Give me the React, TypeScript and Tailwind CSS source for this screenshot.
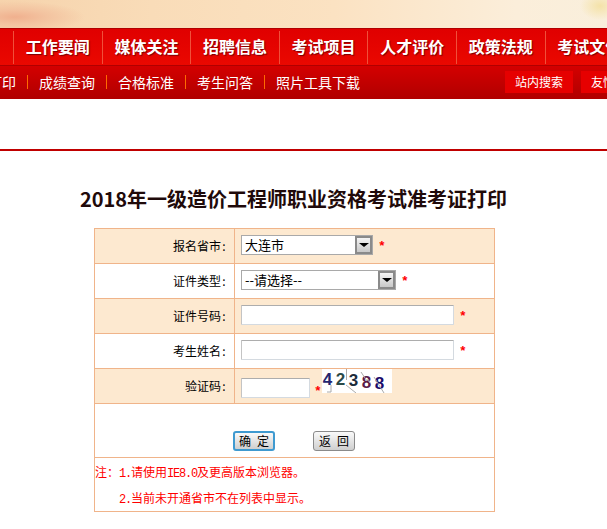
const navItems = ["工作要闻", "媒体关注", "招聘信息", "考试项目", "人才评价", "政策法规", "考试文件"];
const subItems = ["成绩查询", "合格标准", "考生问答", "照片工具下载"];

function SelectBox({ value, width }: { value: string; width: string }) {
  return (
    <div className={`flex h-[20px] items-center border border-[#a9a9a9] bg-white ${width}`}>
      <span className="flex-1 pl-[3px] text-[13px] leading-[18px] text-black">{value}</span>
      <span className="flex h-[18px] w-[17px] items-center justify-center border-2 border-[#8a8a8a] bg-gradient-to-b from-[#f4f4f4] to-[#c8c8c8]">
        <span className="h-0 w-0 border-x-[5px] border-t-[4px] border-x-transparent border-t-black"></span>
      </span>
    </div>
  );
}

function TextBox({ width }: { width: string }) {
  return <div className={`h-[20px] rounded-[1px] border border-[#d4dae0] border-t-[#adadad] border-l-[#c4c4c4] bg-white ${width}`}></div>;
}

function Star({ className }: { className: string }) {
  return <span className={`font-['Liberation_Mono',monospace] text-[13px] font-bold leading-none text-[#ff0000] ${className}`}>*</span>;
}

function Mono({ children }: { children: React.ReactNode }) {
  return <span className="font-['Liberation_Mono',monospace] tracking-[-1.2px]">{children}</span>;
}

function Row({ label, shaded, cell, children }: { label: string; shaded?: boolean; cell?: string; children: React.ReactNode }) {
  return (
    <div className={`flex h-[35px] border-b border-[#f0b48a] ${shaded ? "bg-[#fde9d0]" : "bg-white"}`}>
      <div className="flex w-[140px] items-center justify-end border-r border-[#f0b48a] pr-[7px] text-[12px] text-black">
        {label}
        <span className="inline-block w-[6px] text-center">:</span>
      </div>
      <div className={`flex flex-1 pl-[6px] ${cell ?? "items-center pb-[2px]"}`}>{children}</div>
    </div>
  );
}

function PushButton({ a, b, border }: { a: string; b: string; border: string }) {
  return (
    <div className={`flex h-[20px] w-[42px] items-center justify-center gap-[6px] rounded-[3px] bg-gradient-to-b from-[#fafafa] to-[#cfcfcf] text-[12px] text-black ${border}`}>
      <span>{a}</span>
      <span>{b}</span>
    </div>
  );
}

// digits of the captcha image, with its noise lines laid over them
function Captcha() {
  const digits = [
    { d: "4", c: "text-[#26266e]", m: "mt-[1px]" },
    { d: "2", c: "text-[#2a4a48]", m: "mt-[1px]" },
    { d: "3", c: "text-[#1c2c3c]", m: "mt-[2px]" },
    { d: "8", c: "text-[#5a1a48]", m: "mt-[4px]" },
    { d: "8", c: "text-[#1a0a6a]", m: "mt-[5px]" },
  ];
  return (
    <div className="relative flex h-[24px] w-[70px] bg-white pl-[1px] font-['Liberation_Sans',sans-serif] text-[17px] font-bold leading-[20px]">
      {digits.map((item, i) => (
        <span key={i} className={`w-[13px] ${item.c} ${item.m}`}>{item.d}</span>
      ))}
      <svg className="absolute left-0 top-0" width="70" height="24" fill="none" stroke="#aaaaaa" strokeWidth="1">
        <path d="M24.5 0V11M24 16L34 24M39 3L45 12M52 8L62 24M46 10L48 14M9 16V23H5" />
      </svg>
    </div>
  );
}

export default function App() {
  return (
    <div className="h-[529px] w-[607px] overflow-hidden bg-white font-['Noto_Sans_CJK_SC','Liberation_Sans',sans-serif]">
      <div className="h-[28px] bg-[radial-gradient(ellipse_70px_16px_at_15px_17px,#f0b08e_0%,#f3c3a0_45%,transparent_100%),radial-gradient(ellipse_20px_14px_at_600px_6px,#f4e2a8,transparent),linear-gradient(90deg,#f6d3ac_0%,#f9dcb8_25%,#fbe2c2_55%,#fbeeda_85%,#f9efdc_100%)]"></div>

      <div className="flex h-[38px] border-y border-[#b00000] bg-gradient-to-b from-[#e00000] to-[#ea0800] pl-[13px]">
        {navItems.map((item) => (
          <div key={item} className="flex h-[33px] w-[88.6px] shrink-0 items-center justify-center self-center border-l border-[#f0503a] pb-[2px]">
            <span className="whitespace-nowrap text-[16px] font-bold text-white [text-shadow:1px_1px_1px_#7a0000]">{item}</span>
          </div>
        ))}
      </div>

      <div className="flex h-[33px] items-center bg-gradient-to-b from-[#d40000] to-[#b00000] pb-[1px] text-[14px] text-white">
        <span className="ml-[-12px] whitespace-nowrap">打印</span>
        {subItems.map((item) => (
          <div key={item} className="flex shrink-0 items-center whitespace-nowrap">
            <span className="mx-[11px] h-[14px] w-px bg-[#ff6a00]"></span>
            <span>{item}</span>
          </div>
        ))}
        <div className="ml-[145px] flex h-[22px] w-[68px] shrink-0 items-center justify-center bg-[#e60000] text-[12px]">站内搜索</div>
        <div className="ml-[8px] flex h-[22px] w-[68px] shrink-0 items-center justify-center bg-[#e60000] text-[12px]">友情链接</div>
      </div>

      <div className="mt-[50px] h-[2px] bg-[#c00000]"></div>

      <h1 className="mt-[34px] pr-[20px] text-center text-[20px] font-bold leading-[28px] text-[#1f0a0a]">2018年一级造价工程师职业资格考试准考证打印</h1>

      <div className="ml-[94px] mt-[15px] w-[401px] border-x border-t border-[#f0b48a]">
        <Row label="报名省市" shaded>
          <SelectBox value="大连市" width="w-[132px]" />
          <Star className="ml-[5px] mt-[2px]" />
        </Row>
        <Row label="证件类型">
          <SelectBox value="--请选择--" width="w-[155px]" />
          <Star className="ml-[5px] mt-[2px]" />
        </Row>
        <Row label="证件号码" shaded>
          <TextBox width="w-[213px]" />
          <Star className="ml-[5px] mt-[2px]" />
        </Row>
        <Row label="考生姓名">
          <TextBox width="w-[213px]" />
          <Star className="ml-[5px] mt-[2px]" />
        </Row>
        <Row label="验证码" shaded cell="items-start">
          <div className="mt-[9px]">
            <TextBox width="w-[69px]" />
          </div>
          <Star className="ml-[4px] mt-[16px]" />
          <Captcha />
        </Row>
        <div className="flex h-[54px] items-end justify-center gap-[38px] border-b border-[#f0b48a] pb-[6px] pr-[1px]">
          <PushButton a="确" b="定" border="border-2 border-[#3f9ad0]" />
          <PushButton a="返" b="回" border="border border-[#8a8a8a]" />
        </div>
        <div className="h-[54px] border-b border-[#f0b48a] pt-[1px] text-[12px] leading-[25px] text-[#ff0000]">
          <div className="h-[26px] whitespace-nowrap">
            注：<Mono>1.</Mono>请使用<Mono>IE8.0</Mono>及更高版本浏览器。
          </div>
          <div className="h-[25px] whitespace-nowrap pl-[24px]">
            <Mono>2.</Mono>当前未开通省市不在列表中显示。
          </div>
        </div>
      </div>
    </div>
  );
}
